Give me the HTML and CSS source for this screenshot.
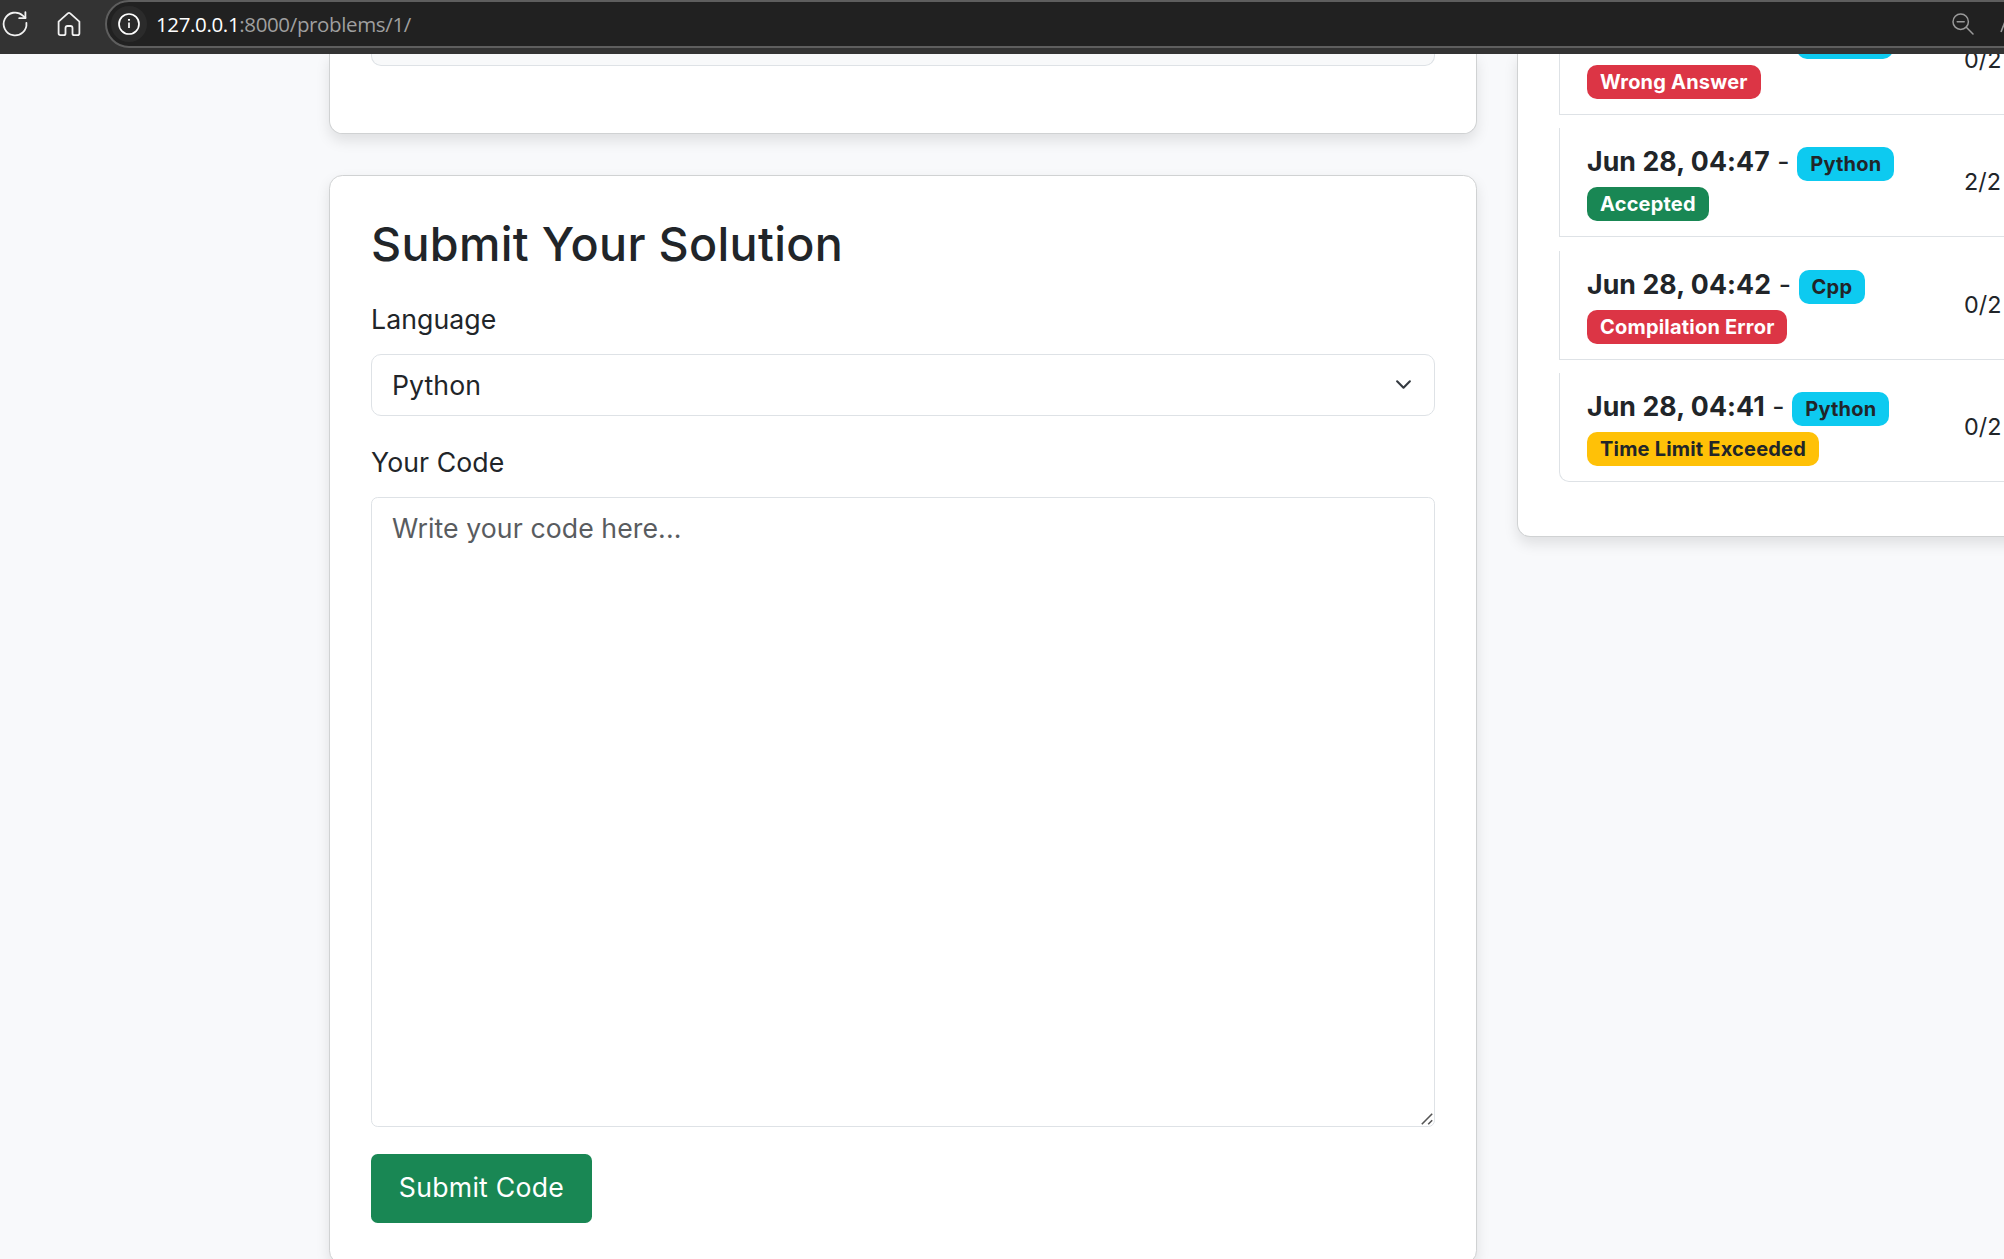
FILE: index.html
```html
<!DOCTYPE html>
<html lang="en">
<head>
<meta charset="utf-8">
<title>Problem 1</title>
<link rel="stylesheet" href="styles.css">
</head>
<body>
<header class="toolbar">
  <svg class="icon-reload" width="28" height="28" viewBox="0 0 28 28" fill="none" stroke="#f2f2f2" stroke-width="1.8" stroke-linecap="round" stroke-linejoin="round"><path d="M25.4 12.8A11.4 11.4 0 1 1 21.8 5.6L24.4 8"/><path d="M24.4 2.2V8.2H18.2"/></svg>
  <svg class="icon-home" width="24" height="26" viewBox="0 0 24 26" fill="none" stroke="#f2f2f2" stroke-width="1.8" stroke-linejoin="round"><path d="M1.6 10.6 L10.8 2.4Q12 1.4 13.2 2.4L22.4 10.6V22.2Q22.4 24.1 20.5 24.1H17.2Q15.5 24.1 15.5 22.4V17Q15.5 15 13.5 15H10.5Q8.5 15 8.5 17V22.4Q8.5 24.1 6.8 24.1H3.5Q1.6 24.1 1.6 22.2Z"/></svg>
  <div class="address">
    <span class="site-info"><svg width="22" height="22" viewBox="0 0 22 22" fill="none" stroke="#fff" stroke-width="1.7"><circle cx="11" cy="11" r="10"/><path d="M11 9.6V15"/><path d="M11 6V7.8" stroke-width="2"/></svg></span>
    <span class="url"><span class="host">127.0.0.1</span>:8000/problems/1/</span>
    <svg class="icon-zoom" width="22" height="22" viewBox="0 0 22 22" fill="none" stroke="#9a9a9a" stroke-width="1.5" stroke-linecap="round"><circle cx="8.7" cy="8.7" r="7.7"/><path d="M5.2 8.7H12.2M14.3 14.3L21 21"/></svg>
    <svg class="icon-read" width="12" height="22" viewBox="0 0 12 22" fill="none" stroke="#9a9a9a" stroke-width="1.6"><path d="M1 19L8 1"/></svg>
  </div>
</header>
<main class="page">
  <div class="column">
    <section class="card card-top"><div class="sample"></div></section>
    <section class="card card-form">
      <h3 class="title">Submit Your Solution</h3>
      <label class="label" for="language">Language</label>
      <div class="select" id="language"><span>Python</span>
        <svg width="17" height="17" viewBox="0 0 16 16" fill="none" stroke="#343a40" stroke-width="2" stroke-linecap="round" stroke-linejoin="round"><path d="m2 5 6 6 6-6"/></svg>
      </div>
      <label class="label" for="code">Your Code</label>
      <div class="editor"><textarea class="code" id="code" placeholder="Write your code here..."></textarea>
        <svg class="grip" width="12" height="12" viewBox="0 0 12 12" fill="none" stroke="#555" stroke-width="1.6"><path d="M.8 11.2L11.2.8M7.2 11.2L11.2 7.2"/></svg>
      </div>
      <button class="submit">Submit Code</button>
    </section>
  </div>
  <aside class="card history">
    <div class="item"><div class="what"><span class="badge info scrolled"></span><br><span class="badge danger">Wrong Answer</span></div><span class="score">0/2</span></div>
    <div class="item"><div class="what"><strong>Jun 28, 04:47</strong> - <span class="badge info">Python</span><br><span class="badge success">Accepted</span></div><span class="score">2/2</span></div>
    <div class="item"><div class="what"><strong>Jun 28, 04:42</strong> - <span class="badge info">Cpp</span><br><span class="badge danger">Compilation Error</span></div><span class="score">0/2</span></div>
    <div class="item"><div class="what"><strong>Jun 28, 04:41</strong> - <span class="badge info">Python</span><br><span class="badge warning">Time Limit Exceeded</span></div><span class="score">0/2</span></div>
  </aside>
</main>
</body>
</html>
```

FILE: styles.css
```css
* { box-sizing: border-box; }
body {
  margin: 0;
  height: 1259px;
  overflow: hidden;
  background: #f8f9fb;
  color: #212529;
  font: 400 26.667px/40px Inter, "Liberation Sans", sans-serif;
  letter-spacing: .08px;
}

/* Browser toolbar */
.toolbar {
  display: flex;
  height: 54px;
  background: #333;
  overflow: hidden;
}
.icon-reload { flex: none; margin: 10px 0 0 1px; }
.icon-home { flex: none; margin: 11px 0 0 28px; }
.address {
  flex: none;
  display: flex;
  align-items: center;
  width: 1960px;
  height: 48px;
  margin-left: 24px;
  padding-left: 4px;
  border: 2px solid #5e5e5e;
  border-radius: 24px;
  background: #212121;
}
.site-info {
  display: grid;
  place-items: center;
  width: 36px;
  height: 36px;
  border-radius: 50%;
  background: #2b2b2b;
}
.url {
  width: 1796px;
  margin-left: 9px;
  color: #9f9f9f;
  font: 20.5px/40px "Open Sans", "Noto Sans", sans-serif;
  letter-spacing: -.36px;
}
.host { color: #fff; }
.icon-zoom { flex: none; }
.icon-read { flex: none; margin-left: 26px; }

/* Page */
.page {
  display: grid;
  grid-template-columns: 1148px 600px;
  gap: 40px;
  align-items: start;
  height: 1205px;
  padding-left: 329px;
  overflow: hidden;
}
.card {
  background: #fff;
  border: 1px solid #d0d2d3;
  border-radius: 13.3px;
  box-shadow: 0 6.7px 13.3px rgba(0, 0, 0, .1);
}
.card-top {
  height: 80px;
  padding: 0 41px;
  border-top: 0;
  border-radius: 0 0 13.3px 13.3px;
}
.sample {
  height: 12px;
  background: #f8f9fa;
  border: 1px solid #dee2e6;
  border-top: 0;
  border-radius: 0 0 10px 10px;
}
.card-form {
  display: flex;
  flex-direction: column;
  height: 1089px;
  margin-top: 41px;
  padding: 40px 41px;
}
.title {
  margin: 0 0 27px;
  font-size: 46.667px;
  font-weight: 500;
  line-height: 56px;
  letter-spacing: .32px;
}
.label { margin-bottom: 15px; }
.select {
  display: flex;
  align-items: center;
  justify-content: space-between;
  height: 62px;
  margin-bottom: 26px;
  padding: 0 22px 1px 20px;
  border: 1px solid #dee2e6;
  border-radius: 10px;
}
.editor { position: relative; height: 630px; }
.code {
  display: block;
  width: 100%;
  height: 630px;
  padding: 10px 20px;
  border: 1px solid #dee2e6;
  border-radius: 6.7px;
  color: inherit;
  font: inherit;
  letter-spacing: inherit;
  resize: none;
  outline: 0;
}
.code::placeholder { color: #595c5f; opacity: 1; }
.grip { position: absolute; right: 2px; bottom: 2px; }
.submit {
  align-self: flex-start;
  width: 221px;
  height: 69px;
  margin-top: 27px;
  padding: 0 0 3px;
  border: 0;
  border-radius: 6.7px;
  background: #198754;
  color: #fff;
  font: inherit;
  letter-spacing: .25px;
}

/* Submission history */
.history {
  display: flex;
  flex-direction: column;
  justify-content: flex-end;
  gap: 13.3px;
  height: 483px;
  padding: 0 41px 54px;
  border-top: 0;
  border-radius: 0 0 13.3px 13.3px;
}
.item {
  flex: none;
  display: flex;
  align-items: center;
  height: 109px;
  padding: 0 27px;
  border: 1px solid #dee2e6;
  border-top: 0;
}
.item:last-child { border-radius: 0 0 10px 10px; }
.what { width: 377px; padding-bottom: 2px; }
.what strong { font-weight: 650; letter-spacing: .1px; }
.score { font-size: 23.333px; }
.badge {
  display: inline-block;
  padding: 7px 13px;
  border-radius: 10px;
  color: #fff;
  font-size: 20px;
  font-weight: 700;
  line-height: 20px;
  letter-spacing: .2px;
}
.badge.scrolled {
  width: 96px;
  height: 34px;
  margin-left: 210px;
  vertical-align: -10px;
}
.info { background: #0dcaf0; color: #212529; }
.danger { background: #dc3545; }
.success { background: #198754; }
.warning { background: #ffc107; color: #212529; }
```
